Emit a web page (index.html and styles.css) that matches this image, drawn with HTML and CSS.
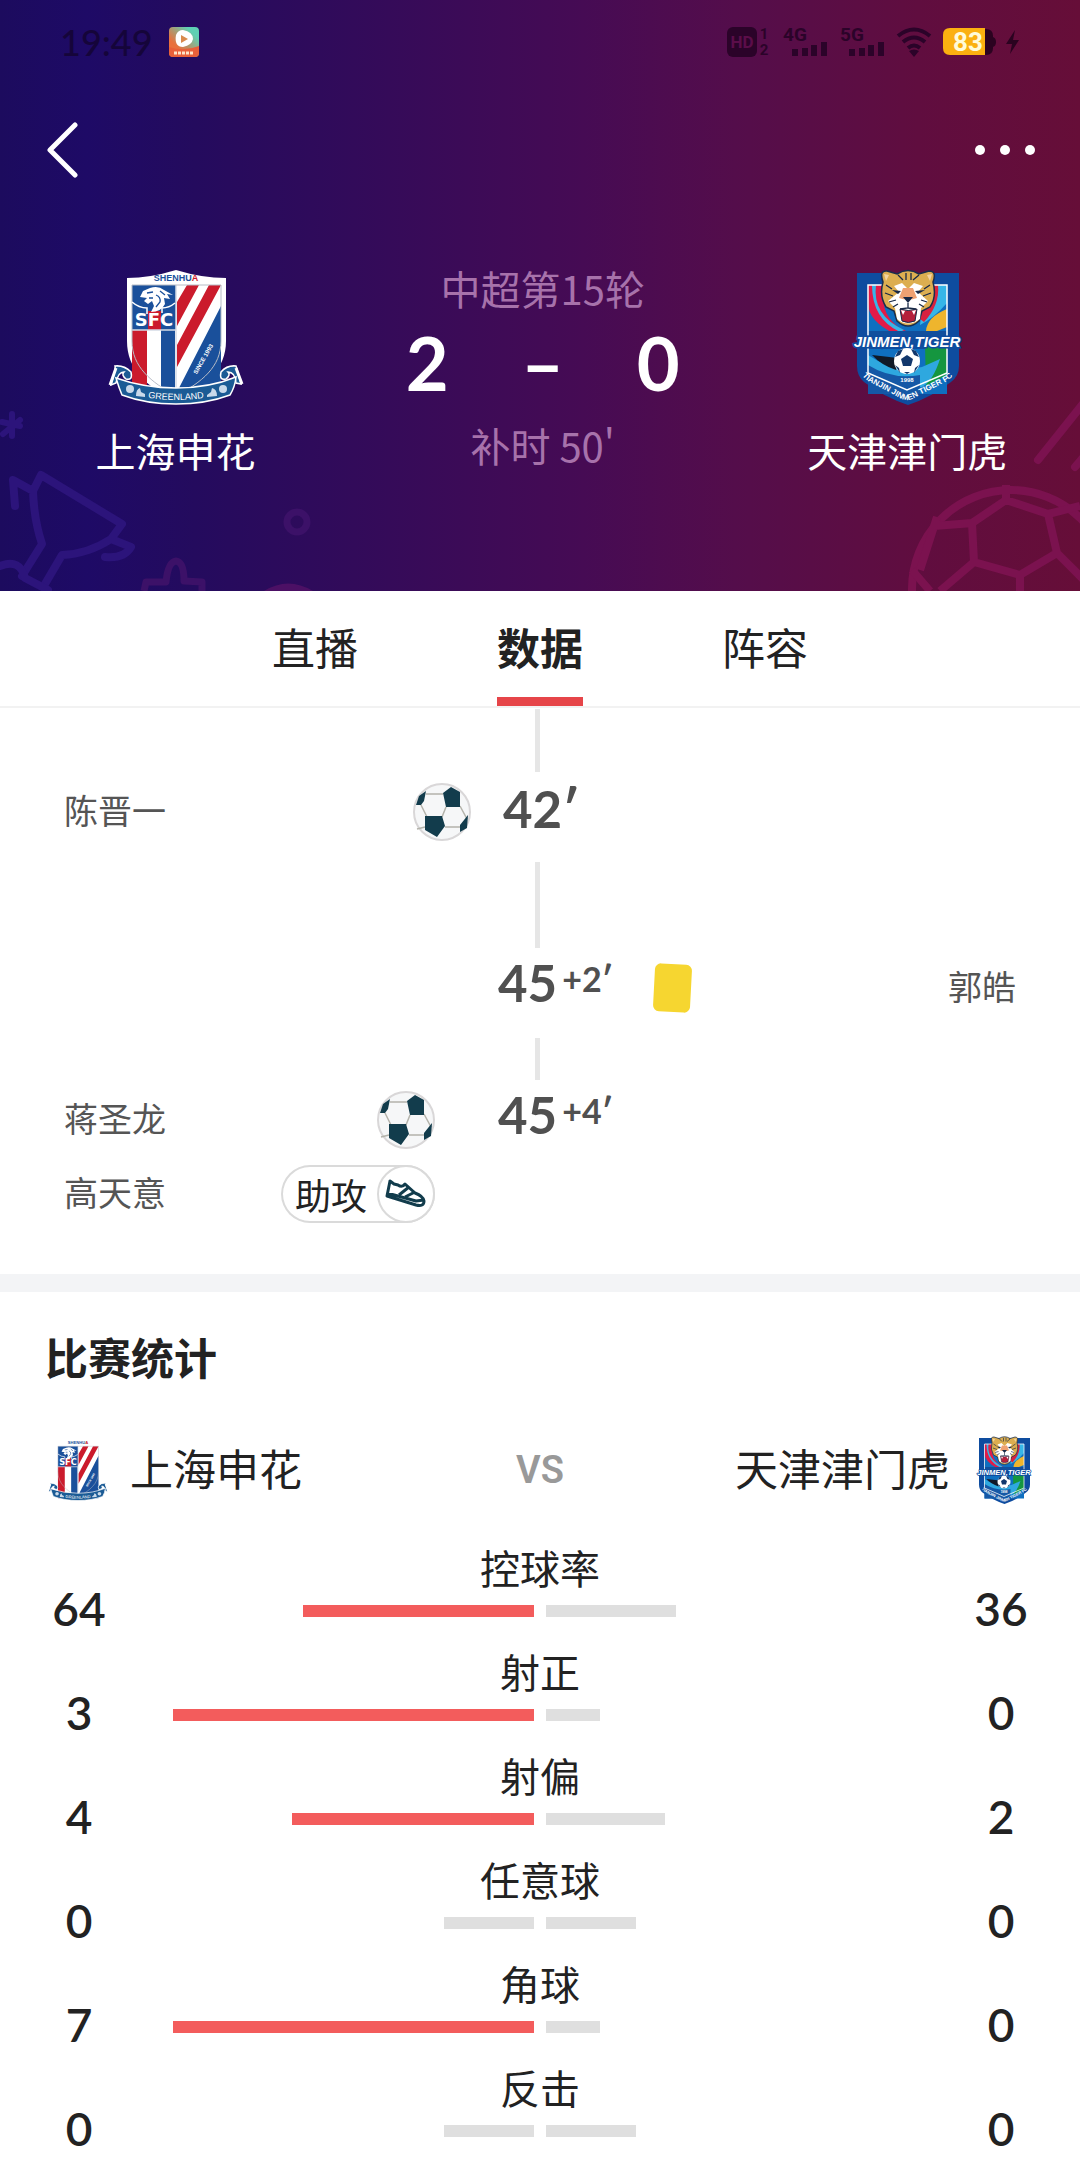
FILE: index.html
```html
<!DOCTYPE html>
<html lang="zh-CN">

<head>
    <meta charset="UTF-8">
    <meta name="viewport" content="width=device-width">
    <title>上海申花 2-0 天津津门虎</title>
    <link rel="stylesheet" href="styles.css">
</head>

<body>
    <!-- 公用图标 -->
    <svg class="sprite" aria-hidden="true">
        <defs>
            <clipPath id="sh-clip">
                <path d="M24 16H113V72C113 98 94 113 68 127C43 113 24 98 24 72Z" />
            </clipPath>
            <clipPath id="tj-clip">
                <path d="M18 16H97V106L57 124L18 106Z" />
            </clipPath>
            <clipPath id="ball-clip">
                <circle cx="29" cy="29" r="27" />
            </clipPath>
            <path id="sh-arc" d="M30 127Q68 135 106 127" />
            <path id="tj-arc" d="M10 80V98Q10 108 20 113L50 129Q57 133 64 129L95 113Q105 108 105 98V80" />
        </defs>
        <symbol id="logo-shenhua" viewBox="0 0 136 136">
            <path d="M19 9Q42 9 68 1Q94 9 118 9V72C118 100 98 118 68 131C38 118 19 100 19 72Z" fill="#fff" />
            <g clip-path="url(#sh-clip)">
                <path d="M24 16H68V61H24Z" fill="#1a509b" />
                <path d="M24 61H39V130H24ZM79 16H91L69 57V33ZM101 16H113L69 98V76Z" fill="#cb1b2c" />
                <path d="M53 61H67V130H53ZM113 37V130H66L72 117Z" fill="#1a509b" />
                <path d="M40 42H53V61H40Z" fill="#cb1b2c" />
            </g>
            <path d="M24 61H68M68 16V122" stroke="#d5dbe6" stroke-width="1.5" />
            <path d="M24 16H113V72C113 98 94 113 68 127C43 113 24 98 24 72Z" fill="none" stroke="#b7bcc6" stroke-width="1" />
            <!-- 狮头 -->
            <path d="M32 28L35 22L42 19Q50 16 56 21L65 26L59 25L62 30L56 29L57 35Q53 43 43 43L46 37L44 32L40 35L36 32L39 29Z" fill="#fff" />
            <path d="M24 33Q31 39 39 39V45M67 34Q61 39 54 39V44" fill="none" stroke="#fff" stroke-width="1.5" />
            <path d="M39 24L45 23M48 26Q53 28 52 33L48 38M52 22L57 26M41 29L45 29" fill="none" stroke="#1a509b" stroke-width="1.3" />
            <text x="46" y="57" class="crest-sfc">SFC</text>
            <text x="68" y="12" class="crest-top">SHENHU<tspan fill="#cb1b2c">A</tspan></text>
            <text x="97" y="91" class="crest-since" transform="rotate(-60 97 91)">SINCE 1993</text>
            <path d="M7 97Q16 96 23 103Q25 112 18 110Q13 106 16 103Q10 103 8 114L3 116Q8 100 7 97ZM128 97Q119 96 113 103Q111 112 118 110Q123 106 120 103Q127 103 128 114L133 115Q129 100 128 97Z" fill="#1b5b95" stroke="#fff" stroke-width="1.5" />
            <path d="M8 109Q36 119 68 119Q101 119 128 108Q127 118 122 126Q98 135 68 135Q38 135 14 126Q11 119 8 109Z" fill="#1b5b95" stroke="#fff" stroke-width="1.5" />
            <path d="M8 99L2 116M128 99L134 115" stroke="#fff" stroke-width="3" />
            <text class="crest-band"><textPath href="#sh-arc" startOffset="50%">GREENLAND</textPath></text>
            <g fill="#c9d9ea">
                <circle cx="22" cy="120" r="4" />
                <circle cx="115" cy="120" r="4" />
                <path d="M28 127Q28 120 32 119L33 123L37 125V128ZM109 127Q109 120 104 119L103 123L99 126V128Z" />
            </g>
        </symbol>
        <symbol id="logo-jinmen" viewBox="0 0 114 136">
            <path d="M7 4H109V97Q109 107 101 113Q82 128 58 136Q34 128 14 113Q7 107 7 97Z" fill="#0e4c9f" />
            <g clip-path="url(#tj-clip)">
                <path d="M18 16H97V125H18Z" fill="#0f6fc0" />
                <path d="M18 16H38Q26 40 48 58L62 65H45Q18 52 18 34Z" fill="#e11b48" />
                <path d="M26 16Q22 46 54 61L50 63Q22 50 22 16Z" fill="#36b6e8" />
                <path d="M75 16H97V34Q85 48 70 56Z" fill="#36b6e8" />
                <path d="M76 16H88Q90 36 74 53L66 47Z" fill="#d8213f" />
                <path d="M97 40V58L87 62H76Q77 48 97 40Z" fill="#eeb52d" />
                <path d="M18 62H97V80H18Z" fill="#114f9d" />
                <path d="M75 76H97V106L76 117Z" fill="#15963f" />
                <path d="M18 86Q44 104 72 98L90 90Q83 112 72 118H50Q28 106 18 96Z" fill="#2ea8df" />
                <path d="M22 86L48 89L46 101Q31 96 22 86Z" fill="#101927" />
                <path d="M18 96Q42 111 70 106V125H18Z" fill="#1558a6" />
            </g>
            <path d="M18 16H97V104L57 121L18 104Z" fill="none" stroke="#fff" stroke-width="1.5" />
            <!-- 虎头 -->
            <path d="M33 13Q29 1 37 2L47 5Q58 -2 69 5L79 2Q87 2 83 13Q87 28 80 38L72 42L69 52Q58 62 47 52L44 42L36 38Q29 27 33 13Z" fill="#dcae50" stroke="#1a2d4d" stroke-width="1.5" />
            <path d="M44 17L52 14L58 20L64 14L73 17L68 23L78 32L71 39L70 50Q58 59 47 50L45 39L38 32L49 23Z" fill="#fff" />
            <path d="M53 19H63L67 29Q58 32 49 29Z" fill="#efa172" />
            <path d="M50 40Q58 43 67 40L65 52Q58 55 52 52Z" fill="#b51f3b" stroke="#192744" />
            <path d="M51 41L53 46L55 42ZM66 41L64 46L62 42Z" fill="#fff" />
            <path d="M53 28H63L58 34ZM42 21L51 22L48 25ZM75 21L65 22L68 25Z" fill="#172846" />
            <path d="M58 34V39L50 40M58 39L66 40M48 6L53 11M69 6L63 11M56 4V11M61 4V11M36 16L42 20M80 16L74 20M35 24L43 27M81 24L73 27M39 33L46 31M77 33L71 31M43 38L48 35M74 38L69 35" fill="none" stroke="#172846" stroke-width="1.3" />
            <path d="M34 5L39 6L36 12ZM82 5L77 6L80 12Z" fill="#f2d4a2" />
            <text x="57" y="78" class="crest-tiger">JINMEN,TIGER</text>
            <circle cx="57" cy="92" r="13" fill="#fff" />
            <path d="M57 86L63 90L61 97H53L51 90ZM48 82L53 80L50 86L45 88ZM66 82L61 80L64 86L69 88ZM45 96L49 99L50 104ZM69 96L65 99L64 104ZM54 103H60L57 105Z" fill="#12376c" />
            <text x="57" y="113" class="crest-year">1998</text>
            <text class="crest-ring"><textPath href="#tj-arc" startOffset="50%">TIANJIN JINMEN TIGER FC</textPath></text>
        </symbol>
        <symbol id="icon-ball" viewBox="0 0 58 58">
            <circle cx="29" cy="29" r="28" fill="#f6f7f8" stroke="#d9d7d8" stroke-width="2" />
            <g clip-path="url(#ball-clip)">
                <path d="M13 11H30M8 22L14 34M33 24L29 34M47 23L54 36M32 44H48M4 46L12 44" stroke="#b4b3ab" stroke-width="1.5" fill="none" />
                <path d="M30 10L38 4L47 9V24H33ZM12 33H29L32 43L24 54L12 47ZM3 22L6 13L13 8L11 18L8 22ZM55 32L47 42V49L54 45Z" fill="#123c4c" />
            </g>
        </symbol>
    </svg>

    <header class="header">
        <svg class="decor decor-left" viewBox="0 0 320 191" aria-hidden="true">
            <g fill="none" stroke="#2c147b" stroke-width="8" stroke-linejoin="round" stroke-linecap="round">
                <path d="M12 14V36M2 22L20 26M3 34L20 20" stroke-width="6" />
                <path d="M15 106L13 80L33 91L41 75L122 124L111 139Q88 154 62 155L45 184M33 91Q34 120 42 144L22 176M111 139L131 147Q124 159 105 157" />
                <path d="M0 166Q20 158 25 178L48 190" />
            </g>
            <g fill="none" stroke="#3c1168" stroke-width="7" stroke-linejoin="round">
                <circle cx="297" cy="122" r="10" />
                <path d="M144 191L146 182H166Q168 162 176 161Q184 162 184 181L202 182V191" />
            </g>
            <path d="M264 191Q288 176 313 191Z" fill="#4c1065" />
        </svg>
        <svg class="decor decor-right" viewBox="0 0 220 211" aria-hidden="true">
            <g fill="none" stroke="#7b124f" stroke-width="8">
                <path d="M178 80L226 20M215 87L226 74" stroke-linecap="round" />
                <circle cx="151" cy="209" r="99" />
                <path d="M146 105V120L112 143L74 146M146 120L188 134L197 173L160 195L114 182L112 143M188 134L220 126M197 173L224 200M160 195V211M114 182L80 211M52 190L70 211M77 137L60 190" />
            </g>
        </svg>

        <div class="status-bar">
            <div class="status-left">
                <span class="clock">19:49</span>
                <svg width="30" height="30" viewBox="0 0 30 30" aria-hidden="true">
                    <defs>
                        <linearGradient id="app-bg" x1="0" y1="1" x2="1" y2="0">
                            <stop offset="0.3" stop-color="#e9703d" />
                            <stop offset="0.8" stop-color="#5fd0b4" />
                        </linearGradient>
                    </defs>
                    <rect width="30" height="30" rx="4" fill="url(#app-bg)" />
                    <path d="M0 20Q15 25 30 19V26Q30 30 26 30H4Q0 30 0 26Z" fill="#e8603a" />
                    <path d="M7 8Q9 3 14 3Q24 5 24 12Q23 18 14 20Q5 20 7 8Z" fill="#fff" />
                    <path d="M12 8L19 12L12 16Z" fill="#d98a4d" />
                    <path d="M5 26H25" stroke="#ffe4c8" stroke-width="3" stroke-dasharray="3 1" />
                </svg>
            </div>
            <div class="status-right">
                <svg width="44" height="32" viewBox="0 -1 44 32" aria-hidden="true">
                    <rect width="30" height="30" rx="6" fill="#2b0329" />
                    <text x="15" y="21" class="hd-text">HD</text>
                    <text x="37" y="12" class="sim-text">1</text>
                    <text x="37" y="28" class="sim-text">2</text>
                </svg>
                <svg width="46" height="32" viewBox="-1 -1 46 32" aria-hidden="true">
                    <text x="0" y="14" class="net-text">4G</text>
                    <path d="M12 22V29M22 21V29M31 18V29M41 15V29" class="signal" />
                </svg>
                <svg width="46" height="32" viewBox="-1 -1 46 32" aria-hidden="true">
                    <text x="0" y="14" class="net-text">5G</text>
                    <path d="M12 22V29M22 21V29M31 18V29M41 15V29" class="signal" />
                </svg>
                <svg width="36" height="30" viewBox="0 0 36 30" aria-hidden="true">
                    <path d="M2 9Q18 -4 34 9M7 15Q18 6 29 15M12 21Q18 16 24 21" fill="none" stroke="#2b0329" stroke-width="4" />
                    <path d="M13 24Q18 21 23 24L18 30Z" fill="#2b0329" />
                </svg>
                <svg width="76" height="28" viewBox="0 0 76 28" aria-hidden="true">
                    <path d="M40 1H43Q50 1 50 8V9Q53 10 53 14Q53 18 50 19V20Q50 27 43 27H40Z" fill="#2b0320" />
                    <path d="M7 0H42V27H7Q0 27 0 20V7Q0 0 7 0Z" fill="#fbb010" />
                    <text x="25" y="23" class="battery-text">83</text>
                    <path d="M72 2L63 16H69L67 26L76 12H70Z" fill="#2b0320" />
                </svg>
            </div>
        </div>

        <nav class="nav">
            <button class="nav-btn" type="button" aria-label="返回">
                <svg width="32" height="56" viewBox="0 0 32 56">
                    <path d="M28 3L3 28L28 53" fill="none" stroke="#fff" stroke-width="5" stroke-linecap="round" stroke-linejoin="round" />
                </svg>
            </button>
            <button class="nav-btn" type="button" aria-label="更多">
                <svg width="62" height="12" viewBox="0 0 62 12" fill="#fff">
                    <circle cx="6" cy="6" r="5" />
                    <circle cx="31" cy="6" r="5" />
                    <circle cx="56" cy="6" r="5" />
                </svg>
            </button>
        </nav>

        <div class="match">
            <div class="team">
                <svg class="team-logo" width="136" height="136" role="img" aria-label="上海申花队徽"><use href="#logo-shenhua" /></svg>
                <p>上海申花</p>
            </div>
            <div class="match-info">
                <p class="match-round">中超第15轮</p>
                <p class="score"><span>2</span><span>–</span><span>0</span></p>
                <p class="match-status">补时 50'</p>
            </div>
            <div class="team">
                <svg class="team-logo" width="114" height="136" role="img" aria-label="天津津门虎队徽"><use href="#logo-jinmen" /></svg>
                <p>天津津门虎</p>
            </div>
        </div>
    </header>

    <nav class="tabs">
        <button class="tab" type="button"><span>直播</span></button>
        <button class="tab active" type="button"><span>数据</span></button>
        <button class="tab" type="button"><span>阵容</span></button>
    </nav>

    <section class="timeline">
        <div class="line line-first"></div>
        <div class="event event-short">
            <div class="event-home">
                <span class="player">陈晋一</span>
                <svg width="58" height="58" role="img" aria-label="进球"><use href="#icon-ball" /></svg>
            </div>
            <div class="event-time">42′</div>
        </div>
        <div class="line line-long"></div>
        <div class="event">
            <div class="event-home"></div>
            <div class="event-time">45<small>+2′</small></div>
            <div class="event-away">
                <span class="card" role="img" aria-label="黄牌"></span>
                <span class="player">郭皓</span>
            </div>
        </div>
        <div class="line line-small"></div>
        <div class="event event-last">
            <div class="event-home">
                <span class="player">蒋圣龙</span>
                <svg width="58" height="58" role="img" aria-label="进球"><use href="#icon-ball" /></svg>
            </div>
            <div class="event-time">45<small>+4′</small></div>
        </div>
        <div class="event event-assist">
            <div class="event-home">
                <span class="player">高天意</span>
                <span class="assist">助攻
                    <svg width="58" height="58" viewBox="0 0 58 58" aria-hidden="true">
                        <circle cx="29" cy="29" r="28" fill="#fff" stroke="#dadada" stroke-width="2" />
                        <g fill="none" stroke="#123c4c" stroke-width="3" stroke-linejoin="round">
                            <path d="M13 16L10 31L39 40Q47 42 47 36Q46 31 38 28L28 19Q25 23 21 20L17 19ZM10 28L39 36L47 35" />
                            <path d="M22 30L32 22M28 32L38 27" />
                        </g>
                    </svg>
                </span>
            </div>
        </div>
    </section>

    <section class="stats">
        <h2>比赛统计</h2>
        <div class="versus">
            <div class="versus-team">
                <svg width="62" height="68" role="img" aria-label="上海申花队徽"><use href="#logo-shenhua" /></svg>
                <span>上海申花</span>
            </div>
            <span class="vs">VS</span>
            <div class="versus-team versus-away">
                <span>天津津门虎</span>
                <svg width="58" height="68" role="img" aria-label="天津津门虎队徽"><use href="#logo-jinmen" /></svg>
            </div>
        </div>
        <div class="stat-list">
            <div class="stat">
                <span class="num">64</span>
                <div class="stat-main">
                    <p>控球率</p>
                    <div class="bars">
                        <div class="bar-home"><i class="red" style="width: 64%"></i></div>
                        <div class="bar-away"><i style="width: 36%"></i></div>
                    </div>
                </div>
                <span class="num">36</span>
            </div>
            <div class="stat">
                <span class="num">3</span>
                <div class="stat-main">
                    <p>射正</p>
                    <div class="bars">
                        <div class="bar-home"><i class="red" style="width: 100%"></i></div>
                        <div class="bar-away"><i style="width: 15%"></i></div>
                    </div>
                </div>
                <span class="num">0</span>
            </div>
            <div class="stat">
                <span class="num">4</span>
                <div class="stat-main">
                    <p>射偏</p>
                    <div class="bars">
                        <div class="bar-home"><i class="red" style="width: 67%"></i></div>
                        <div class="bar-away"><i style="width: 33%"></i></div>
                    </div>
                </div>
                <span class="num">2</span>
            </div>
            <div class="stat">
                <span class="num">0</span>
                <div class="stat-main">
                    <p>任意球</p>
                    <div class="bars">
                        <div class="bar-home"><i style="width: 25%"></i></div>
                        <div class="bar-away"><i style="width: 25%"></i></div>
                    </div>
                </div>
                <span class="num">0</span>
            </div>
            <div class="stat">
                <span class="num">7</span>
                <div class="stat-main">
                    <p>角球</p>
                    <div class="bars">
                        <div class="bar-home"><i class="red" style="width: 100%"></i></div>
                        <div class="bar-away"><i style="width: 15%"></i></div>
                    </div>
                </div>
                <span class="num">0</span>
            </div>
            <div class="stat">
                <span class="num">0</span>
                <div class="stat-main">
                    <p>反击</p>
                    <div class="bars">
                        <div class="bar-home"><i style="width: 25%"></i></div>
                        <div class="bar-away"><i style="width: 25%"></i></div>
                    </div>
                </div>
                <span class="num">0</span>
            </div>
        </div>
    </section>
</body>

</html>
```

FILE: styles.css
```css
* {
    margin: 0;
    padding: 0;
    box-sizing: border-box;
}

body {
    background-color: #fff;
    color: #222;
    font-family: "Noto Sans CJK SC", sans-serif;
    font-size: 40px;
    line-height: 48px;
}

button {
    border: 0 none;
    background: none;
    color: inherit;
    font: inherit;
    cursor: pointer;
}

svg {
    display: block;
    flex: none;
}

.sprite {
    display: none;
}

/* 队徽里的文字 */
.crest-sfc,
.crest-top,
.crest-since,
.crest-band,
.crest-tiger,
.crest-year,
.crest-ring {
    font-family: "Liberation Sans", sans-serif;
    font-weight: bold;
    text-anchor: middle;
    fill: #fff;
}

.crest-sfc {
    font-family: "DejaVu Sans", sans-serif;
    font-size: 18px;
}

.crest-top {
    font-size: 9px;
    fill: #1a509b;
}

.crest-since {
    font-size: 6px;
}

.crest-band {
    font-size: 9px;
    font-weight: normal;
}

.crest-tiger {
    font-size: 15px;
    font-style: italic;
    stroke: #0e4c9f;
    stroke-width: 3px;
    paint-order: stroke;
}

.crest-year {
    font-size: 6px;
}

.crest-ring {
    font-size: 8px;
}

/* 头部 */
.header {
    position: relative;
    overflow: hidden;
    padding-bottom: 117px;
    color: #fff;
    background: linear-gradient(90deg, #1c0b5e 0, #1e0a66 8%, #240b5e 18%, #350b59 36%, #460b54 54%, #540d4b 68%, #600d3f 85%, #660e38 100%);
}

.decor {
    position: absolute;
    bottom: 0;
}

.decor-left {
    left: 0;
    width: 320px;
    height: 191px;
}

.decor-right {
    right: 0;
    width: 220px;
    height: 211px;
}

.status-bar {
    display: flex;
    justify-content: space-between;
    align-items: center;
    height: 84px;
    padding: 0 61px 0 60px;
}

.status-left {
    display: flex;
    align-items: center;
    gap: 16px;
}

.clock {
    color: #15053a;
    font-family: Lato, sans-serif;
    font-size: 36px;
    font-weight: 500;
}

.status-right {
    display: flex;
    align-items: center;
    gap: 11px;
}

.hd-text,
.sim-text,
.net-text,
.battery-text {
    font-family: Roboto, sans-serif;
    font-weight: bold;
    fill: #2b0329;
}

.hd-text {
    font-size: 17px;
    text-anchor: middle;
    fill: #5b0d49;
}

.sim-text {
    font-size: 15px;
    text-anchor: middle;
}

.net-text {
    font-size: 19px;
}

.battery-text {
    font-size: 26px;
    text-anchor: middle;
    fill: #fffbd8;
}

.signal {
    fill: none;
    stroke: #2b0329;
    stroke-width: 6px;
}

.nav {
    display: flex;
    justify-content: space-between;
    align-items: center;
    height: 132px;
    padding: 0 44px 0 47px;
}

.match {
    position: relative;
    display: grid;
    grid-template-columns: 65fr 71fr 64fr;
    padding-top: 48px;
    text-align: center;
}

.team {
    padding-top: 5px;
}

.team-logo {
    margin: 0 auto 21px;
}

.match-round,
.match-status {
    color: #a772ab;
}

.score {
    display: flex;
    justify-content: space-between;
    width: 274px;
    margin: 14px auto 21px;
    font-family: Lato, sans-serif;
    font-size: 74px;
    font-weight: bold;
    line-height: 74px;
}

/* 选项卡 */
.tabs {
    display: flex;
    justify-content: center;
    height: 117px;
    border-bottom: 2px solid #f2f2f2;
}

.tab {
    display: flex;
    justify-content: center;
    width: 225px;
    font-size: 43px;
}

.tab span {
    height: 115px;
    line-height: 110px;
}

.tab.active span {
    border-bottom: 9px solid #e64549;
    font-weight: bold;
}

/* 比赛事件 */
.timeline {
    padding: 1px 64px 46px;
    color: #555;
    font-size: 34px;
}

.line {
    width: 10px;
    margin: 0 auto;
    border-left: 5px solid #e6e6e6;
}

.line-first {
    height: 63px;
}

.line-long {
    height: 86px;
}

.line-small {
    height: 42px;
}

.event {
    display: grid;
    grid-template-columns: 1fr 210px 1fr;
    align-items: center;
    height: 80px;
    margin-bottom: 10px;
}

.event-short {
    grid-template-columns: 1fr 138px 1fr;
}

.event-last {
    margin-bottom: 0;
}

.event-assist {
    height: 68px;
    margin-bottom: 0;
}

.event-home,
.event-away {
    display: flex;
    justify-content: space-between;
    align-items: center;
}

.event-away {
    padding-left: 9px;
}

.player {
    padding-bottom: 5px;
}

.event-time {
    display: flex;
    padding: 0 0 10px 63px;
    color: #505050;
    font-family: Lato, "Noto Sans CJK SC", sans-serif;
    font-size: 51px;
    font-weight: bold;
}

.event-short .event-time {
    padding-bottom: 6px;
    padding-left: 32px;
}

.event-time small {
    padding-left: 5px;
    font-size: 34px;
    line-height: 40px;
}

.card {
    width: 37px;
    height: 48px;
    border-radius: 6px;
    background-color: #f6d630;
    transform: rotate(3deg);
}

.assist {
    display: flex;
    justify-content: space-between;
    align-items: center;
    width: 154px;
    height: 58px;
    padding-left: 14px;
    border-radius: 29px;
    box-shadow: inset 0 0 0 2px #dadada;
    color: #222;
    font-size: 36px;
}

/* 比赛统计 */
.stats {
    padding-top: 34px;
    border-top: 18px solid #f3f4f6;
}

.stats h2 {
    padding-left: 45px;
    font-size: 43px;
    line-height: 60px;
}

.versus {
    display: grid;
    grid-template-columns: 1fr auto 1fr;
    align-items: center;
    margin: 50px 47px 42px;
    font-size: 43px;
}

.versus-team {
    display: flex;
    align-items: center;
    gap: 21px;
}

.versus-team span {
    padding-bottom: 6px;
}

.versus-away {
    justify-content: flex-end;
    gap: 25px;
}

.vs {
    color: #999;
    font-family: Roboto, sans-serif;
    font-size: 38px;
    font-weight: 600;
}

.stat-list {
    display: flex;
    flex-direction: column;
    gap: 20px;
}

.stat {
    display: grid;
    grid-template-columns: 158px 1fr 158px;
    height: 84px;
    text-align: center;
}

.num {
    align-self: end;
    font-family: Lato, sans-serif;
    font-size: 46px;
    font-weight: 600;
    line-height: 42px;
}

.stat-main {
    padding: 0 15px;
}

.stat-main p {
    line-height: 43px;
}

.bars {
    display: grid;
    grid-template-columns: 1fr 1fr;
    gap: 12px;
    margin-top: 16px;
}

.bars div {
    display: flex;
}

.bars i {
    height: 12px;
    background-color: #dfdfdf;
}

.bars .red {
    background-color: #f35c5c;
}

.bar-home {
    justify-content: flex-end;
}
```
